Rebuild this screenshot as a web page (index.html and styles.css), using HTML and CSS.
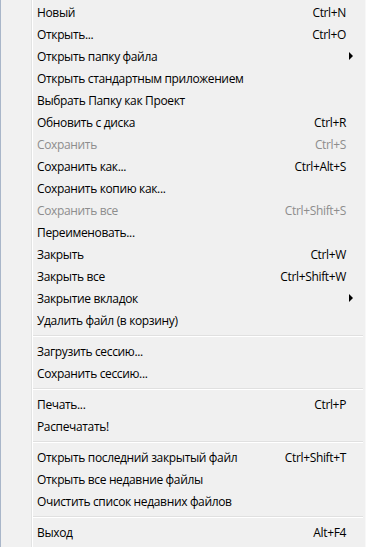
FILE: index.html
```html
<!DOCTYPE html>
<html lang="ru">
<head>
    <meta charset="UTF-8">
    <meta name="viewport" content="width=device-width, initial-scale=1.0">
    <title>Файл</title>
    <link rel="stylesheet" href="styles.css">
</head>
<body>

    <div class="menu">
        <div class="item"><span>Новый</span><span class="key">Ctrl+N</span></div>
        <div class="item"><span>Открыть...</span><span class="key">Ctrl+O</span></div>
        <div class="item sub"><span>Открыть папку файла</span></div>
        <div class="item"><span>Открыть стандартным приложением</span></div>
        <div class="item"><span>Выбрать Папку как Проект</span></div>
        <div class="item"><span>Обновить с диска</span><span class="key">Ctrl+R</span></div>
        <div class="item disabled"><span>Сохранить</span><span class="key">Ctrl+S</span></div>
        <div class="item"><span>Сохранить как...</span><span class="key">Ctrl+Alt+S</span></div>
        <div class="item"><span>Сохранить копию как...</span></div>
        <div class="item disabled"><span>Сохранить все</span><span class="key">Ctrl+Shift+S</span></div>
        <div class="item"><span>Переименовать...</span></div>
        <div class="item"><span>Закрыть</span><span class="key">Ctrl+W</span></div>
        <div class="item"><span>Закрыть все</span><span class="key">Ctrl+Shift+W</span></div>
        <div class="item sub"><span>Закрытие вкладок</span></div>
        <div class="item"><span>Удалить файл (в корзину)</span></div>
        <div class="sep"></div>
        <div class="item"><span>Загрузить сессию...</span></div>
        <div class="item"><span>Сохранить сессию...</span></div>
        <div class="sep"></div>
        <div class="item"><span>Печать...</span><span class="key">Ctrl+P</span></div>
        <div class="item"><span>Распечатать!</span></div>
        <div class="sep"></div>
        <div class="item"><span>Открыть последний закрытый файл</span><span class="key">Ctrl+Shift+T</span></div>
        <div class="item"><span>Открыть все недавние файлы</span></div>
        <div class="item"><span>Очистить список недавних файлов</span></div>
        <div class="sep"></div>
        <div class="item"><span>Выход</span><span class="key">Alt+F4</span></div>
    </div>

</body>
</html>
```

FILE: styles.css
```css
body { margin: 0; font-family: "Open Sans", "Noto Sans", sans-serif; font-size: 12px; letter-spacing: -0.35px; color: #000; }
.menu { height: 547px; box-sizing: border-box; padding-top: 1px; border-left: 1px solid #a9b6c9; border-right: 1px solid #f8f8f8;
    background: linear-gradient(to right, #f1f1f1 30px, #e2e3e3 30px 31px, #fff 31px 32px, #f0f0f0 32px); }
.item { height: 22px; display: flex; align-items: center; justify-content: space-between; padding: 0 19px 0 36px; position: relative; }
.key { text-align: right; }
.disabled { color: #8d8d8d; }
.sub::after { content: ""; position: absolute; right: 12px; top: 7px; border-left: 4px solid #000; border-top: 4px solid transparent; border-bottom: 4px solid transparent; }
.sep { height: 9px; margin-left: 32px; margin-right: 2px; background: linear-gradient(#f0f0f0 4px, #e0e0e0 4px 5px, #fff 5px 6px, #f0f0f0 6px); }
```
